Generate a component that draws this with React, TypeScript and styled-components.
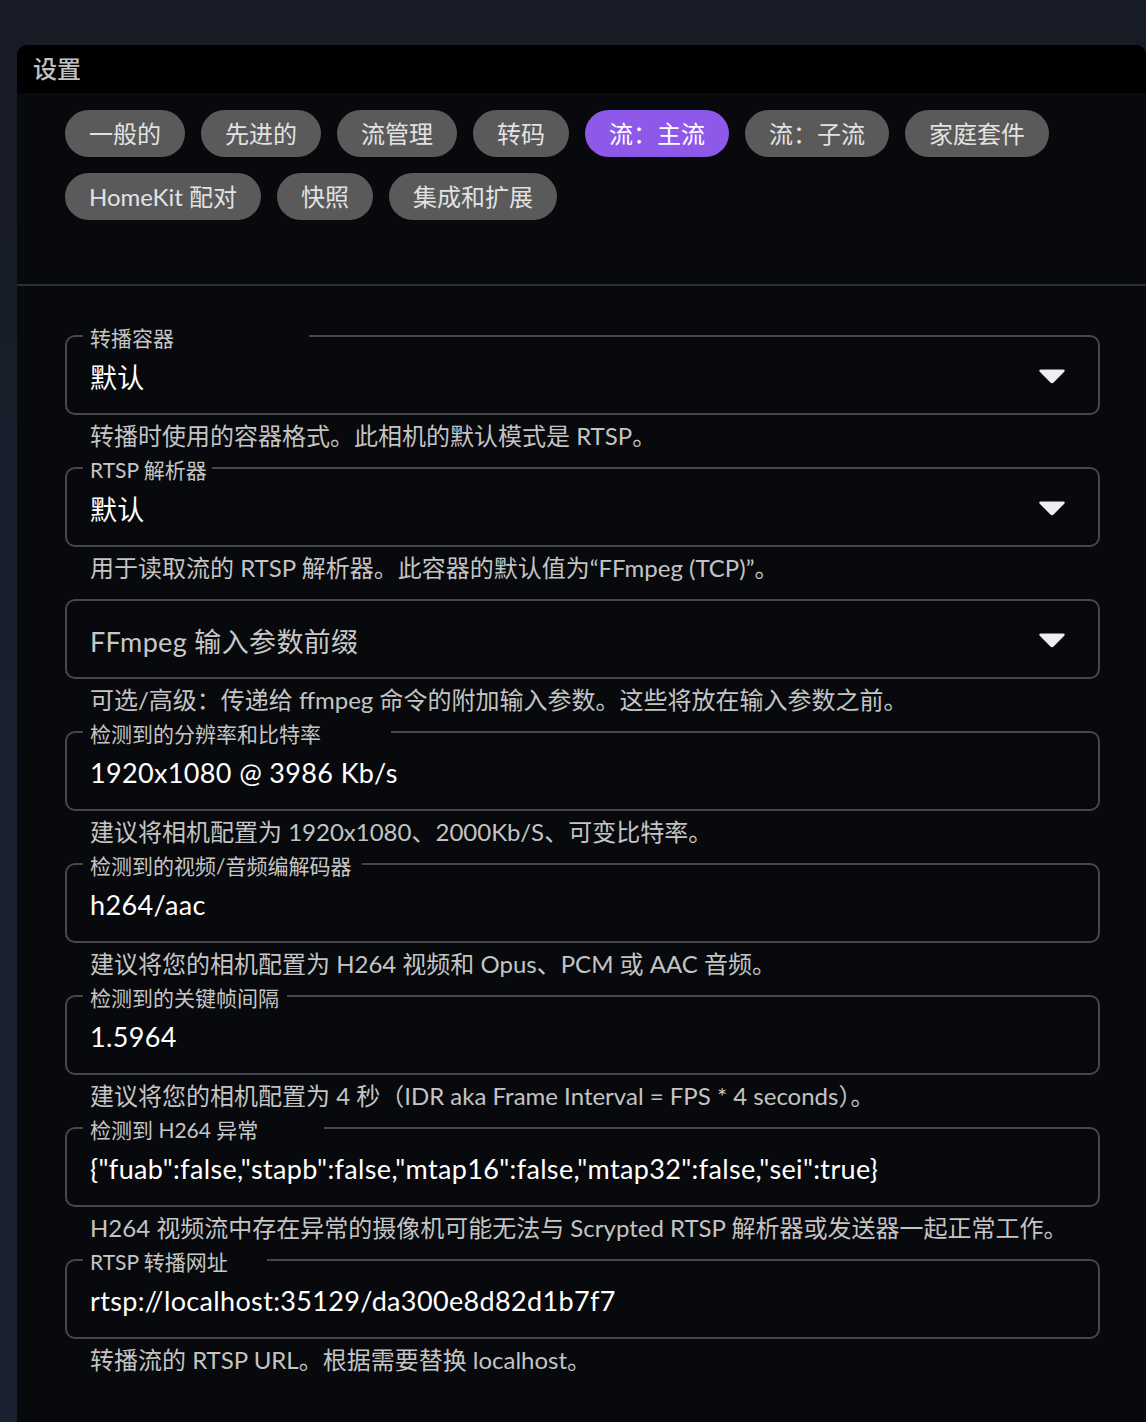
import styled, { createGlobalStyle } from "styled-components";

const GlobalStyle = createGlobalStyle`
html, body {
  margin: 0;
  padding: 0;
  background: #1a1f2e;
}
body {
  font-family: "Lato", "Noto Sans CJK SC", sans-serif;
}
`;

const Page = styled.div`
display: flex;
flex-direction: column;
min-height: 100vh;
padding-top: 45px;
padding-left: 17px;
box-sizing: border-box;
background: linear-gradient(180deg, #161b26 0%, #1b2030 60%, #1c2131 100%);
`;

const Card = styled.div`
flex: 1;
display: flex;
flex-direction: column;
border-radius: 10px 10px 0 0;
overflow: hidden;
background: #07090c;
`;

const Header = styled.div`
height: 48px;
display: flex;
align-items: center;
padding: 0 0 4px 16px;
box-sizing: border-box;
background: #000;
color: #c2c2c2;
font-size: 24px;
font-weight: 500;
`;

const Tabs = styled.div`
display: flex;
flex-wrap: wrap;
gap: 16px;
padding: 17px 48px 64px;
border-bottom: 2px solid #2a2d32;
`;

const Tab = styled.button<{ $active?: boolean }>`
box-sizing: border-box;
height: 47px;
padding: 0 24px 3px;
border: none;
border-radius: 24px;
font-family: inherit;
font-size: 24px;
color: ${({ $active }) => ($active ? "#ffffff" : "#e2e2e2")};
background: ${({ $active }) => ($active ? "#8e58e8" : "#5a5a5a")};
cursor: pointer;
`;

const Form = styled.div`
display: flex;
flex-direction: column;
gap: 4px;
padding: 39px 46px 45px 48px;
`;

const Group = styled.div`
display: flex;
flex-direction: column;
`;

const Outline = styled.fieldset`
margin: 0;
padding: 0 23px 4px;
border: 2px solid #46484c;
border-radius: 10px;
min-width: 0;
`;

const Legend = styled.legend<{ $notch: number; $empty?: boolean }>`
height: 22px;
line-height: 22px;
margin-left: -7px;
padding: ${({ $notch, $empty }) => ($empty ? "0" : `0 ${$notch}px 0 7px`)};
font-size: 21px;
color: #c6c6c6;
white-space: nowrap;
`;

const LegendText = styled.span`
position: relative;
top: 2px;
`;

const Row = styled.div`
box-sizing: border-box;
height: 62px;
padding-bottom: 3px;
display: flex;
align-items: center;
justify-content: space-between;
`;

const Value = styled.span<{ $placeholder?: boolean }>`
font-size: 27px;
letter-spacing: 0.35px;
color: ${({ $placeholder }) => ($placeholder ? "#c8c8c8" : "#ffffff")};
white-space: nowrap;
`;

const Caret = styled.svg`
width: 28px;
height: 15px;
margin-right: 9px;
flex-shrink: 0;
`;

const Helper = styled.div`
margin-top: 4px;
padding-left: 25px;
line-height: 34px;
font-size: 24px;
color: #c4c4c4;
white-space: nowrap;
`;

const tabs = [
  "一般的",
  "先进的",
  "流管理",
  "转码",
  "流：主流",
  "流：子流",
  "家庭套件",
  "HomeKit 配对",
  "快照",
  "集成和扩展",
];

interface IField {
  label?: string;
  notch: number;
  value: string;
  placeholder?: boolean;
  select?: boolean;
  helper: string;
}

const fields: IField[] = [
  {
    label: "转播容器",
    notch: 135,
    value: "默认",
    select: true,
    helper: "转播时使用的容器格式。此相机的默认模式是 RTSP。",
  },
  {
    label: "RTSP 解析器",
    notch: 5,
    value: "默认",
    select: true,
    helper: "用于读取流的 RTSP 解析器。此容器的默认值为“FFmpeg (TCP)”。",
  },
  {
    notch: 0,
    value: "FFmpeg 输入参数前缀",
    placeholder: true,
    select: true,
    helper: "可选/高级：传递给 ffmpeg 命令的附加输入参数。这些将放在输入参数之前。",
  },
  {
    label: "检测到的分辨率和比特率",
    notch: 70,
    value: "1920x1080 @ 3986 Kb/s",
    helper: "建议将相机配置为 1920x1080、2000Kb/S、可变比特率。",
  },
  {
    label: "检测到的视频/音频编解码器",
    notch: 10,
    value: "h264/aac",
    helper: "建议将您的相机配置为 H264 视频和 Opus、PCM 或 AAC 音频。",
  },
  {
    label: "检测到的关键帧间隔",
    notch: 8,
    value: "1.5964",
    helper: "建议将您的相机配置为 4 秒（IDR aka Frame Interval = FPS * 4 seconds）。",
  },
  {
    label: "检测到 H264 异常",
    notch: 66,
    value: '{"fuab":false,"stapb":false,"mtap16":false,"mtap32":false,"sei":true}',
    helper: "H264 视频流中存在异常的摄像机可能无法与 Scrypted RTSP 解析器或发送器一起正常工作。",
  },
  {
    label: "RTSP 转播网址",
    notch: 39,
    value: "rtsp://localhost:35129/da300e8d82d1b7f7",
    helper: "转播流的 RTSP URL。根据需要替换 localhost。",
  },
];

const DropCaret = () => (
  <Caret viewBox="0 0 28 15">
    <path
      d="M3 0.5 H25 Q28 0.5 26 3 L15.6 13.4 Q14 15 12.4 13.4 L2 3 Q0 0.5 3 0.5 Z"
      fill="#eceef1"
    />
  </Caret>
);

export default function App() {
  return (
    <>
      <GlobalStyle />
      <Page>
        <Card>
          <Header>设置</Header>
          <Tabs>
            {tabs.map((t) => (
              <Tab key={t} $active={t === "流：主流"}>
                {t}
              </Tab>
            ))}
          </Tabs>
          <Form>
            {fields.map((f, i) => (
              <Group key={i}>
                <Outline>
                  <Legend $notch={f.notch} $empty={!f.label}>
                    {f.label && <LegendText>{f.label}</LegendText>}
                  </Legend>
                  <Row>
                    <Value $placeholder={f.placeholder}>{f.value}</Value>
                    {f.select && <DropCaret />}
                  </Row>
                </Outline>
                <Helper>{f.helper}</Helper>
              </Group>
            ))}
          </Form>
        </Card>
      </Page>
    </>
  );
}
